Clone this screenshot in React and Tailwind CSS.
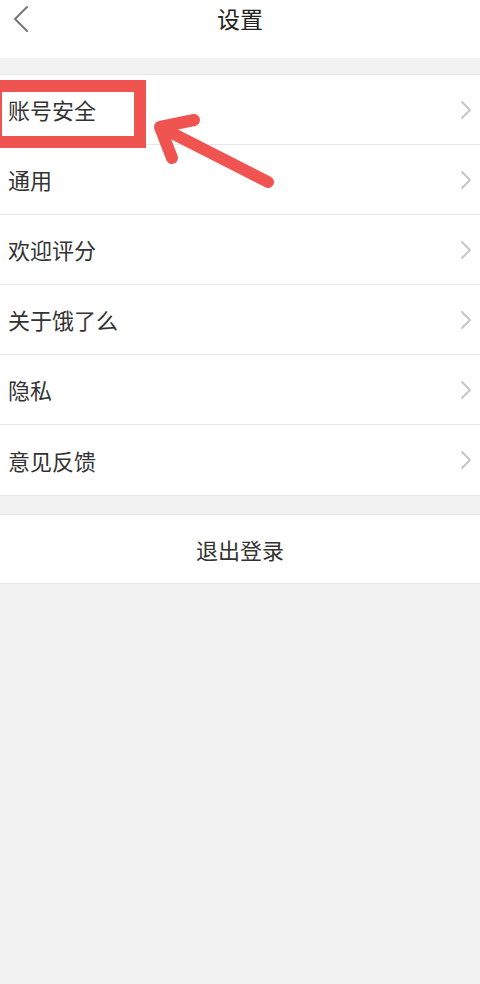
const ROWS = ["账号安全", "通用", "欢迎评分", "关于饿了么", "隐私", "意见反馈"];

const font = { fontFamily: '"Noto Sans CJK SC", "Noto Sans", sans-serif' };

function Chevron() {
  return (
    <svg width="12" height="20" viewBox="0 0 12 20" className="text-[#c4c4c4]">
      <path d="M2 2l8 8-8 8" fill="none" stroke="currentColor" strokeWidth="1.8" strokeLinecap="round" strokeLinejoin="round" />
    </svg>
  );
}

export default function App() {
  return (
    <div className="w-[480px] h-[984px] bg-[#f2f2f2] flex flex-col relative overflow-hidden" style={font}>
      <div className="h-[58px] bg-white flex items-center justify-center relative">
        <svg width="18" height="28" viewBox="0 0 18 28" className="absolute left-[12px] top-[5px] text-[#777]">
          <path d="M15 2L3 14l12 12" fill="none" stroke="currentColor" strokeWidth="2" strokeLinecap="round" strokeLinejoin="round" />
        </svg>
        <span className="text-[23px] text-[#222] -mt-[22px]">设置</span>
      </div>

      <div className="mt-[16px] bg-white border-t border-b border-[#e6e6e6]">
        {ROWS.map((label, i) => (
          <div
            key={label}
            className={`h-[70px] flex items-center justify-between pl-[8px] pr-[8px] ${i < ROWS.length - 1 ? "border-b border-[#e8e8e8]" : ""}`}
          >
            <span className="text-[22px] text-[#333]">{label}</span>
            <Chevron />
          </div>
        ))}
      </div>

      <div className="mt-[18px] h-[70px] bg-white border-t border-b border-[#e6e6e6] flex items-center justify-center">
        <span className="text-[22px] text-[#333]">退出登录</span>
      </div>

      {/* annotation overlay */}
      <div className="absolute left-[-10px] top-[80px] w-[156px] h-[68px] border-[12px] border-[#f05451]" />
      <svg width="480" height="240" viewBox="0 0 480 240" className="absolute left-0 top-0 pointer-events-none">
        <g fill="none" stroke="#f05451" strokeWidth="12" strokeLinecap="round" strokeLinejoin="round">
          <path d="M268 182L162 128" />
          <path d="M194 120L160 127L172 158" />
        </g>
      </svg>
    </div>
  );
}
